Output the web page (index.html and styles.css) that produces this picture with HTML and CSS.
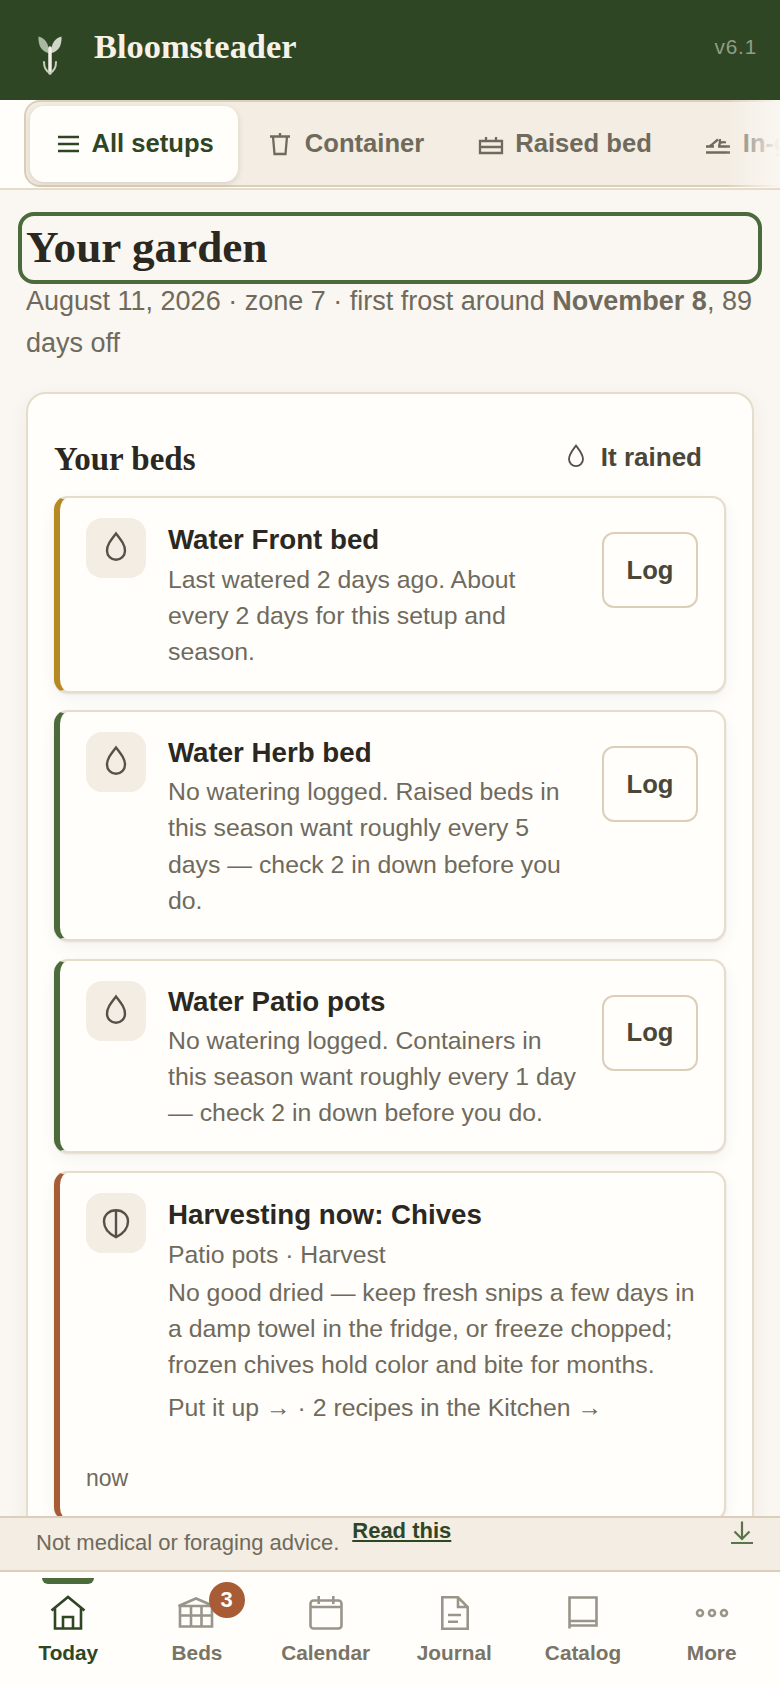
FILE: index.html
```html
<!DOCTYPE html>
<html lang="en">
<head>
    <meta charset="UTF-8">
    <meta name="viewport" content="width=device-width, initial-scale=1.0">
    <title>Bloomsteader</title>
    <link rel="stylesheet" href="styles.css">
</head>
<body>
    <header class="topbar">
        <div class="brand">
            <svg class="brand-icon" viewBox="0 0 28 40" fill="none">
                <path d="M13 18C6 17 2 11 2.500 1.500C8.500 3 13 8 13 18Z" fill="#a9b8a0"/>
                <path d="M15 18C22 17 26 11 25.500 1.500C19.500 3 15 8 15 18Z" fill="#cfd7c6"/>
                <path d="M14 13V38" stroke="#f5f0e6" stroke-width="3.500" stroke-linecap="round"/>
                <path d="M14 38C9.500 36 8 32 8 27M14 38C18.500 36 20 32 20 27" stroke="#c6d0bd" stroke-width="2" stroke-linecap="round"/>
            </svg>
            <span class="brand-name">Bloomsteader</span>
        </div>
        <span class="version">v6.1</span>
    </header>

    <div class="tabs">
        <div class="tab-rail">
            <button class="tab active">
                <svg class="tab-icon" viewBox="0 0 26 26"><path d="M4 6H25M4 13H25M4 20H25"/></svg>
                All setups
            </button>
            <button class="tab">
                <svg class="tab-icon" viewBox="0 0 26 26"><path d="M3 5.500H23M13 2V5.500M6 5.500L7.500 23H18.500L20 5.500"/></svg>
                Container
            </button>
            <button class="tab">
                <svg class="tab-icon" viewBox="0 0 26 26"><path d="M2 10H24V22H2ZM2 16H24M8 10V6M18 10V6"/></svg>
                Raised bed
            </button>
            <button class="tab">
                <svg class="tab-icon" viewBox="0 0 26 26"><path d="M1 15.500H9M13 15.500H25M1 21.500H25M4 15.500C7 14 10 11 13 8.500M14 15.500C15 13 15 11 15 8M15 12C17 11 19 11 21 11.500"/></svg>
                In-ground
            </button>
        </div>
        <div class="tab-fade"></div>
    </div>

    <main class="page">
        <h1 class="page-title">Your garden</h1>
        <p class="page-sub">August 11, 2026 · zone 7 · first frost around <strong>November 8</strong>, 89 days off</p>

        <section class="card">
            <div class="card-head">
                <h2>Your beds</h2>
                <button class="rain-btn">
                    <svg class="drop small" viewBox="0 0 24 24"><path d="M12 2.300C8.500 6.800 6 9.800 6 13.800C6 17.300 8.700 19.800 12 19.800C15.300 19.800 18 17.300 18 13.800C18 9.800 15.500 6.800 12 2.300Z"/></svg>
                    It rained
                </button>
            </div>

            <article class="task amber roomy">
                <div class="task-icon"><svg class="drop" viewBox="0 0 24 24"><path d="M12 2.300C8.500 6.800 6 9.800 6 13.800C6 17.300 8.700 19.800 12 19.800C15.300 19.800 18 17.300 18 13.800C18 9.800 15.500 6.800 12 2.300Z"/></svg></div>
                <div class="task-body">
                    <h3>Water Front bed</h3>
                    <p>Last watered 2 days ago. About every 2 days for this setup and season.</p>
                </div>
                <button class="log-btn">Log</button>
            </article>

            <article class="task green">
                <div class="task-icon"><svg class="drop" viewBox="0 0 24 24"><path d="M12 2.300C8.500 6.800 6 9.800 6 13.800C6 17.300 8.700 19.800 12 19.800C15.300 19.800 18 17.300 18 13.800C18 9.800 15.500 6.800 12 2.300Z"/></svg></div>
                <div class="task-body">
                    <h3>Water Herb bed</h3>
                    <p>No watering logged. Raised beds in this season want roughly every 5 days — check 2 in down before you do.</p>
                </div>
                <button class="log-btn">Log</button>
            </article>

            <article class="task green">
                <div class="task-icon"><svg class="drop" viewBox="0 0 24 24"><path d="M12 2.300C8.500 6.800 6 9.800 6 13.800C6 17.300 8.700 19.800 12 19.800C15.300 19.800 18 17.300 18 13.800C18 9.800 15.500 6.800 12 2.300Z"/></svg></div>
                <div class="task-body">
                    <h3>Water Patio pots</h3>
                    <p>No watering logged. Containers in this season want roughly every 1 day — check 2 in down before you do.</p>
                </div>
                <button class="log-btn">Log</button>
            </article>

            <article class="task rust roomy">
                <div class="task-icon"><svg class="leaf" viewBox="0 0 24 24"><path d="M12 21.500C8 19.500 4 16 4 11C4 6.500 7.500 3.500 12 3.500C16.500 3.500 20 6.500 20 11C20 16 16 19.500 12 21.500ZM12 3.500V21"/></svg></div>
                <div class="task-body">
                    <h3>Harvesting now: Chives</h3>
                    <p class="task-meta">Patio pots · Harvest</p>
                    <p>No good dried — keep fresh snips a few days in a damp towel in the fridge, or freeze chopped; frozen chives hold color and bite for months.</p>
                    <p class="task-links">Put it up → · 2 recipes in the Kitchen →</p>
                </div>
                <p class="task-time">now</p>
            </article>
        </section>
    </main>

    <div class="notice">
        <span class="notice-text">Not medical or foraging advice.</span>
        <a href="#" class="notice-link">Read this</a>
        <svg class="notice-icon" viewBox="0 0 24 24"><path d="M12 1.500V19M4.500 11.500L12 19L19.500 11.500M1 23H23"/></svg>
    </div>

    <nav class="bottom-nav">
        <a class="nav-item active" href="#">
            <svg viewBox="0 0 36 36"><path d="M1.500 15.500L18 2L34.500 15.500M5 13V33.500H31V13M13 33.500V22H23V33.500"/></svg>
            Today
        </a>
        <a class="nav-item" href="#">
            <svg class="beds-icon" viewBox="0 0 36 36"><path d="M0.500 11L18 3.500L35.500 11ZM2 11V31.500H34V11ZM2 20.500H34M13 11V31.500M23.500 11V31.500"/></svg>
            Beds
            <span class="badge">3</span>
        </a>
        <a class="nav-item" href="#">
            <svg viewBox="0 0 36 36"><rect x="2.500" y="5.500" width="31" height="28" rx="3"/><path d="M2.500 12H33.500M10.700 1V9M25.300 1V9"/></svg>
            Calendar
        </a>
        <a class="nav-item" href="#">
            <svg viewBox="0 0 36 36"><path d="M6.300 2.300H22L31.700 12V33.700H6.300ZM22 2.300V12H31.700M12 20H25M12 26.700H22"/></svg>
            Journal
        </a>
        <a class="nav-item" href="#">
            <svg viewBox="0 0 36 36"><path d="M4.500 33.500V2.500H31.500V30.500H5M4.500 26H31.500"/></svg>
            Catalog
        </a>
        <a class="nav-item" href="#">
            <svg viewBox="0 0 36 36"><circle cx="6" cy="18" r="3"/><circle cx="18" cy="18" r="3"/><circle cx="30" cy="18" r="3"/></svg>
            More
        </a>
    </nav>
</body>
</html>
```

FILE: styles.css
```css
:root {
    --forest: #2f4625;
    --moss: #4c6b3c;
    --amber: #b58a22;
    --rust: #a85c36;
    --ink: #2a2820;
    --muted: #6f6a5c;
    --cream: #f3ede3;
    --paper: #faf6f1;
    --white: #fffefb;
    --line: #e6dccb;
    --line-dark: #dccfba;
}

* {
    box-sizing: border-box;
}

body {
    margin: 0;
    height: 1688px;
    overflow: hidden;
    display: flex;
    flex-direction: column;
    font-family: "Liberation Sans", Arial, sans-serif;
    background-color: var(--paper);
    color: var(--ink);
}

button {
    font-family: inherit;
    cursor: pointer;
}

/* top bar */
.topbar {
    height: 100px;
    flex: none;
    display: flex;
    align-items: center;
    justify-content: space-between;
    padding: 0 23px 0 36px;
    background-color: var(--forest);
}

.brand {
    display: flex;
    align-items: center;
    gap: 30px;
}

.brand-icon {
    width: 28px;
    height: 40px;
    margin-top: 10px;
}

.brand-name {
    font-family: "Liberation Serif", serif;
    font-weight: 700;
    font-size: 34.400px;
    color: #f7f2e8;
    margin-top: -8px;
}

.version {
    font-size: 20.800px;
    letter-spacing: 0.800px;
    color: #8f9f84;
    margin-top: -7px;
}

/* setup tabs */
.tabs {
    height: 90px;
    flex: none;
    position: relative;
    overflow: hidden;
    padding-left: 24px;
    background-color: var(--white);
    border-bottom: 2px solid var(--line);
}

.tab-rail {
    width: 900px;
    height: 87px;
    display: flex;
    align-items: center;
    gap: 5.500px;
    padding: 0 4px;
    background-color: var(--cream);
    border: 2px solid var(--line-dark);
    border-radius: 16px;
}

.tab {
    height: 76px;
    display: flex;
    align-items: center;
    gap: 11.500px;
    padding: 0 24px;
    border: none;
    border-radius: 14px;
    background: none;
    font-size: 25.600px;
    font-weight: 700;
    color: var(--muted);
}

.tab.active {
    background-color: var(--white);
    color: var(--forest);
    box-shadow: 0 2px 6px rgba(60, 50, 30, 0.15);
}

.tab-icon {
    width: 26px;
    height: 26px;
    flex: none;
    fill: none;
    stroke: currentColor;
    stroke-width: 2.300;
}

.tab-fade {
    position: absolute;
    top: 0;
    right: 0;
    width: 55px;
    height: 100%;
    background: linear-gradient(to right, rgba(250, 246, 241, 0), var(--paper));
}

/* page */
.page {
    flex: 1;
    min-height: 0;
    overflow: hidden;
    padding: 30px 26px 0;
}

.page-title {
    margin: 0 0 4px;
    height: 56px;
    font-family: "Liberation Serif", serif;
    font-size: 45.200px;
    line-height: 55px;
    font-weight: 700;
    outline: 4px solid var(--moss);
    outline-offset: 4px;
    border-radius: 8px;
}

.page-sub {
    margin: 0 0 28px;
    font-size: 27px;
    line-height: 42px;
    color: var(--muted);
}

.card {
    padding: 44px 26px 24px;
    background-color: var(--white);
    border: 2px solid var(--line);
    border-radius: 20px;
    box-shadow: 0 6px 20px rgba(60, 50, 30, 0.06);
}

.card-head {
    height: 42px;
    display: flex;
    align-items: center;
    justify-content: space-between;
    margin-bottom: 16px;
}

.card-head h2 {
    margin: 0;
    font-family: "Liberation Serif", serif;
    font-size: 33px;
    font-weight: 700;
}

.rain-btn {
    display: flex;
    align-items: center;
    gap: 11px;
    padding: 0 24px 0 0;
    border: none;
    background: none;
    font-size: 26px;
    font-weight: 700;
    color: #4a4638;
    margin-top: -4px;
}

.task {
    display: flex;
    flex-wrap: wrap;
    align-items: flex-start;
    column-gap: 22px;
    margin-bottom: 17.600px;
    padding: 20px 26px 20px 26px;
    background-color: var(--white);
    border: 2px solid var(--line);
    border-left: 6px solid var(--moss);
    border-radius: 14px;
    box-shadow: 0 1px 2px rgba(60, 50, 30, 0.12), 0 6px 16px rgba(60, 50, 30, 0.06);
}

.task.amber {
    border-left-color: var(--amber);
}

.task.rust {
    border-left-color: var(--rust);
    padding-bottom: 23px;
}

.task-icon {
    width: 60px;
    height: 60px;
    flex: none;
    display: flex;
    align-items: center;
    justify-content: center;
    border-radius: 16px;
    background-color: var(--cream);
}

.drop, .leaf {
    width: 36px;
    height: 36px;
    fill: none;
    stroke: #55514a;
    stroke-width: 1.600;
}

.drop.small {
    width: 28px;
    height: 28px;
}

.task-body {
    flex: 1;
    min-width: 0;
}

.task-body h3 {
    margin: 0;
    font-size: 27.700px;
    line-height: 42px;
    font-weight: 700;
}

.roomy .task-body h3 {
    line-height: 44px;
}

.task-body p {
    margin: 0;
    font-size: 24.800px;
    line-height: 36.200px;
    color: var(--muted);
}

.log-btn {
    width: 96px;
    height: 76px;
    flex: none;
    margin: 14px 0 0;
    border: 2px solid var(--line-dark);
    border-radius: 12px;
    background-color: var(--white);
    font-size: 25.600px;
    font-weight: 700;
    color: #4a4638;
}

.task-body .task-meta {
    margin-bottom: 2px;
}

.task-body .task-links {
    margin-top: 6px;
}

.task-time {
    width: 100%;
    margin: 34px 0 0;
    font-size: 23px;
    line-height: 36px;
    color: var(--muted);
}

/* notice above the nav */
.notice {
    height: 56px;
    flex: none;
    display: flex;
    align-items: flex-start;
    gap: 13px;
    padding: 0 26px 0 36px;
    background-color: var(--cream);
    border-top: 2px solid var(--line-dark);
    border-bottom: 2px solid var(--line-dark);
    font-size: 22px;
    line-height: 32px;
    color: var(--muted);
}

.notice-text {
    margin-top: 9px;
}

.notice-link {
    margin-top: -3px;
    font-weight: 700;
    color: var(--forest);
}

.notice-icon {
    width: 24px;
    height: 24px;
    margin-left: auto;
    margin-top: 2px;
    fill: none;
    stroke: #5a7549;
    stroke-width: 2.200;
}

/* bottom nav */
.bottom-nav {
    height: 116px;
    flex: none;
    display: grid;
    grid-template-columns: repeat(6, 1fr);
    padding: 0 4px;
    background-color: var(--white);
}

.nav-item {
    position: relative;
    display: flex;
    flex-direction: column;
    align-items: center;
    gap: 9.500px;
    padding-top: 23px;
    font-size: 20.800px;
    font-weight: 700;
    color: #7a7466;
    text-decoration: none;
}

.nav-item svg {
    width: 36px;
    height: 36px;
    fill: none;
    stroke: #99958a;
    stroke-width: 2.600;
}

.nav-item .beds-icon {
    margin-left: -2px;
}

.nav-item.active {
    color: var(--forest);
}

.nav-item.active svg {
    stroke: var(--forest);
}

.nav-item.active::before {
    content: "";
    position: absolute;
    top: 6px;
    left: 38px;
    width: 52px;
    height: 6px;
    border-radius: 0 0 6px 6px;
    background-color: var(--moss);
}

.badge {
    position: absolute;
    top: 10px;
    left: 76px;
    width: 36px;
    height: 36px;
    display: flex;
    align-items: center;
    justify-content: center;
    border-radius: 50%;
    background-color: var(--rust);
    font-size: 22px;
    color: var(--white);
}
```
